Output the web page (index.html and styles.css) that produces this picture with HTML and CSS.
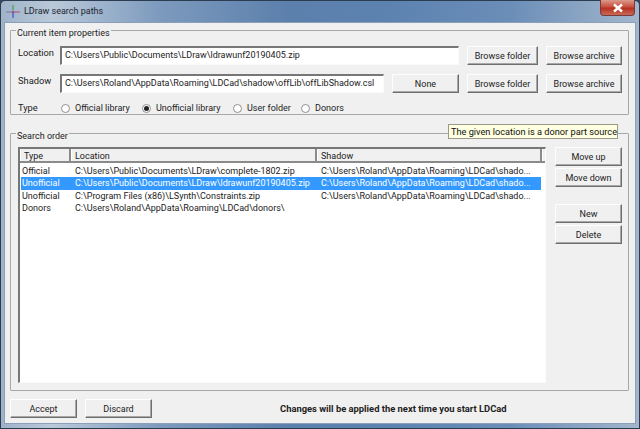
FILE: index.html
```html
<!DOCTYPE html>
<html lang="en">
<head>
<meta charset="utf-8">
<title>LDraw search paths</title>
<link rel="stylesheet" href="styles.css">
</head>
<body>
<div class="window">
  <div class="titlebar">
    <svg class="app-icon" width="16" height="16" viewBox="0 0 16 16">
      <path d="M1 8h6" stroke="#8a8aa8" stroke-width="1.4"/>
      <path d="M8 8h7" stroke="#b06a8a" stroke-width="1.4"/>
      <path d="M8 1v5" stroke="#5aa86a" stroke-width="1.6"/>
      <path d="M8 9v5" stroke="#5a6ac8" stroke-width="1.6"/>
      <circle cx="8" cy="8" r="1.3" fill="#7a5a9a"/>
    </svg>
    <span class="title">LDraw search paths</span>
    <div class="close">
      <svg width="12" height="10" viewBox="0 0 12 10"><path d="M2 1.5l8 7M10 1.5l-8 7" stroke="#fff" stroke-width="2.4"/></svg>
    </div>
  </div>
  <div class="client">
    <fieldset class="group props">
      <legend>Current item properties</legend>
      <div class="row">
        <label class="lbl">Location</label>
        <div class="field grow">C:\Users\Public\Documents\LDraw\ldrawunf20190405.zip</div>
        <button class="btn w72">Browse folder</button>
        <button class="btn w76">Browse archive</button>
      </div>
      <div class="row">
        <label class="lbl">Shadow</label>
        <div class="field grow">C:\Users\Roland\AppData\Roaming\LDCad\shadow\offLib\offLibShadow.csl</div>
        <button class="btn w67">None</button>
        <button class="btn w72">Browse folder</button>
        <button class="btn w76">Browse archive</button>
      </div>
      <div class="row type-row">
        <label class="lbl">Type</label>
        <span class="radio r1"><i class="dot"></i>Official library</span>
        <span class="radio r2"><i class="dot on"></i>Unofficial library</span>
        <span class="radio r3"><i class="dot"></i>User folder</span>
        <span class="radio"><i class="dot"></i>Donors</span>
      </div>
    </fieldset>
    <fieldset class="group order">
      <legend>Search order</legend>
      <div class="tooltip">The given location is a donor part source</div>
      <div class="order-body">
        <div class="list">
          <div class="list-head">
            <span class="hc c1">Type</span>
            <span class="hc c2">Location</span>
            <span class="hc c3">Shadow</span>
            <span class="hc c4"></span>
          </div>
          <div class="list-rows">
            <div class="lrow"><span class="c1">Official</span><span class="c2">C:\Users\Public\Documents\LDraw\complete-1802.zip</span><span class="c3">C:\Users\Roland\AppData\Roaming\LDCad\shado...</span></div>
            <div class="lrow sel"><span class="c1">Unofficial</span><span class="c2">C:\Users\Public\Documents\LDraw\ldrawunf20190405.zip</span><span class="c3">C:\Users\Roland\AppData\Roaming\LDCad\shado...</span></div>
            <div class="lrow"><span class="c1">Unofficial</span><span class="c2">C:\Program Files (x86)\LSynth\Constraints.zip</span><span class="c3">C:\Users\Roland\AppData\Roaming\LDCad\shado...</span></div>
            <div class="lrow"><span class="c1">Donors</span><span class="c2">C:\Users\Roland\AppData\Roaming\LDCad\donors\</span><span class="c3"></span></div>
          </div>
        </div>
        <div class="side">
          <button class="btn">Move up</button>
          <button class="btn">Move down</button>
          <button class="btn gap">New</button>
          <button class="btn">Delete</button>
        </div>
      </div>
    </fieldset>
    <div class="footer">
      <button class="btn w67">Accept</button>
      <button class="btn w67">Discard</button>
      <strong class="notice">Changes will be applied the next time you start LDCad</strong>
    </div>
  </div>
</div>
</body>
</html>
```
FILE: styles.css
```css
* { box-sizing: border-box; }
html, body { margin: 0; height: 100%; }
body { width: 640px; height: 429px; overflow: hidden; font: 9px/12px Roboto, "Liberation Sans", sans-serif; color: #222; background: #33475f; }
.window { width: 640px; height: 429px; display: flex; flex-direction: column; border: 1px solid #2c3d52; border-radius: 5px 5px 0 0; background: linear-gradient(90deg, #9fb2c8 0, #b9c9da 8%, #7c9abd 25%, #5c80ac 45%, #5c82b0 60%, #6b8eb8 80%, #a3b6cc 100%); padding: 0 3px 4px; }
.titlebar { height: 21px; flex: none; display: flex; align-items: center; position: relative; }
.app-icon { margin: 0 3px 0 1px; }
.title { font-size: 9px; color: #1c2430; position: relative; top: -1px; }
.close { position: absolute; right: 1px; top: -1px; width: 35px; height: 16px; background: linear-gradient(#dc9a8c, #c8503f 45%, #b8301f 55%, #c96a5a); border: 1px solid #7a3a38; border-top: none; border-radius: 0 0 4px 4px; display: flex; align-items: center; justify-content: center; }
.client { flex: 1; background: #f0f0f0; border: 1px solid #8ba0b8; padding: 0 6px 0 5px; display: flex; flex-direction: column; position: relative; }

.group { margin: 0; padding: 0; border: 1px solid #a8a8a8; border-radius: 1px; min-width: 0; }
.group legend { padding: 0 1px; margin-left: -2px; line-height: 13px; position: relative; top: 3px; }
.props { height: 91px; margin-top: 1px; padding: 9px 6px 0 7px; }
.order { height: 264px; margin-top: 12px; padding: 7px 6px 0 7px; position: relative; }

.row { display: flex; align-items: center; gap: 8px; height: 19px; margin-bottom: 9px; }
.lbl { width: 34px; flex: none; font-size: 9.3px; position: relative; top: -3px; }
.type-row { gap: 0; height: 14px; margin-top: -1px; margin-bottom: 0; }
.type-row .lbl { top: 0; margin-right: 9px; }
.field { height: 19px; background: #fff; border: 1px solid #fbfbfb; border-top: 2px solid #777; border-left: 2px solid #777; padding: 1px 0 0 3px; white-space: nowrap; overflow: hidden; }
.grow { flex: 1; min-width: 0; }

.btn { height: 19px; padding: 0; font: inherit; color: #222; background: #f0f0f0; border: 1px solid; border-color: #fdfdfd #6e6e6e #6e6e6e #fdfdfd; box-shadow: inset -1px -1px 0 #a8a8a8; flex: none; }
.w67 { width: 67px; }
.w72 { width: 71px; }
.w76 { width: 76px; }

.radio { display: flex; align-items: center; }
.r1 { width: 81px; }
.r2 { width: 91px; }
.r3 { width: 68px; }
.dot { width: 9px; height: 9px; border-radius: 50%; background: #fff; border: 1px solid #8f8f8f; margin-right: 5px; position: relative; }
.dot.on::after { content: ""; position: absolute; left: 1px; top: 1px; width: 5px; height: 5px; border-radius: 50%; background: #222; }

.tooltip { position: absolute; right: 10px; top: -16px; width: 170px; height: 15px; background: #ffffe1; border: 1px solid #9a9a8a; padding: 0 2px; white-space: nowrap; font-size: 9.2px; line-height: 13px; color: #111; z-index: 2; }

.order-body { display: flex; gap: 9px; height: 236px; }
.list { width: 528px; flex: none; background: #fff; border: 1px solid #fbfbfb; border-top: 2px solid #777; border-left: 2px solid #777; display: flex; flex-direction: column; }
.list-head { display: flex; height: 14px; flex: none; background: #f0f0f0; border-bottom: 2px solid #8a8a8a; }
.hc { border-right: 2px solid #8a8a8a; border-left: 1px solid #fff; line-height: 14px; padding-left: 3px; }
.c1 { width: 51px; flex: none; }
.c2 { width: 246px; flex: none; }
.c3 { width: 225px; flex: none; }
.c4 { flex: 1; border-right: none; }
.list-rows { padding: 2px 0 0 1px; }
.lrow { display: flex; height: 12.3px; line-height: 12px; white-space: nowrap; width: 520px; }
.lrow span { padding-left: 1px; overflow: hidden; }
.lrow .c2, .lrow .c3 { padding-left: 3px; }
.sel { background: #3399ff; color: #fff; }

.side { display: flex; flex-direction: column; gap: 2px; width: 67px; flex: none; }
.side .gap { margin-top: 15px; }

.footer { display: flex; align-items: center; gap: 8px; margin-top: 8px; height: 19px; }
.notice { font-size: 9.4px; margin-left: 120px; }
```
